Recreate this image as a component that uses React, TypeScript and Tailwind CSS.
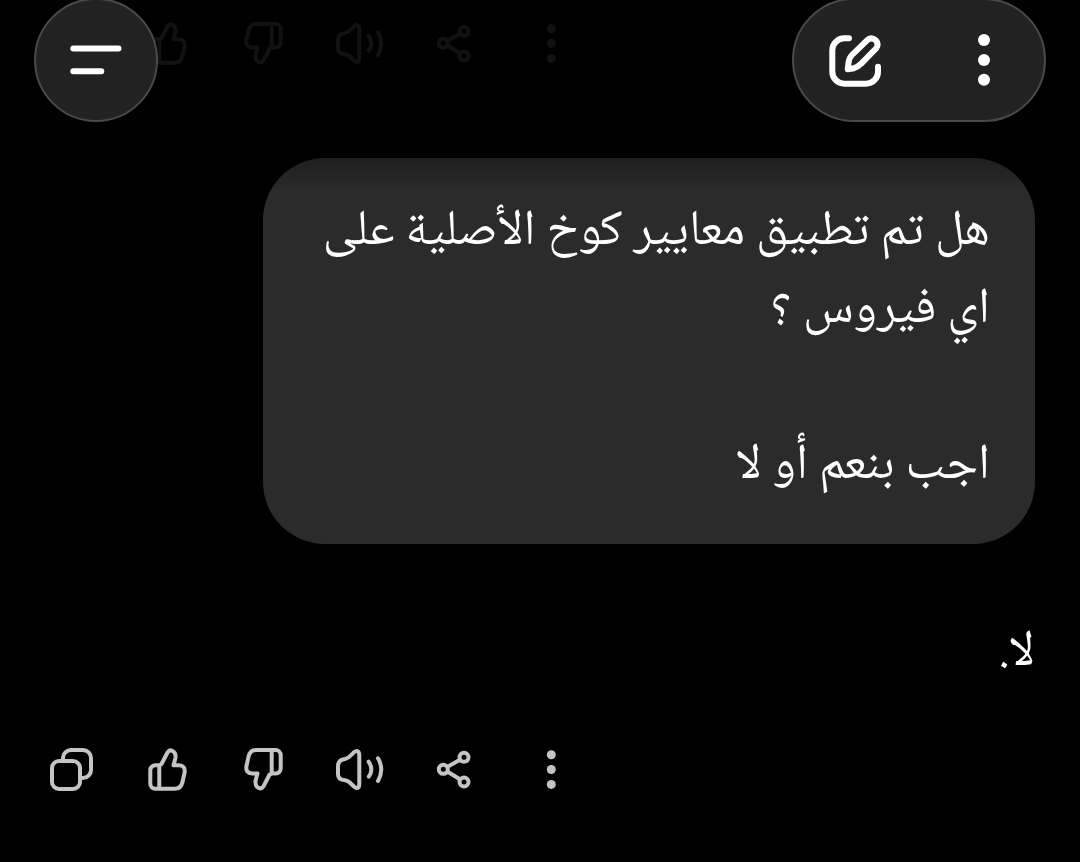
import type { ReactNode } from "react";

type IconProps = { children: ReactNode };

function ActionIcon({ children }: IconProps) {
  return (
    <svg
      viewBox="0 0 48 48"
      className="size-12"
      fill="none"
      stroke="currentColor"
      strokeWidth="4"
      strokeLinecap="round"
      strokeLinejoin="round"
      aria-hidden="true"
    >
      {children}
    </svg>
  );
}

function HeaderIcon({ children }: IconProps) {
  return (
    <svg
      viewBox="0 0 64 64"
      className="size-16"
      fill="none"
      stroke="currentColor"
      strokeWidth="6"
      strokeLinecap="round"
      strokeLinejoin="round"
      aria-hidden="true"
    >
      {children}
    </svg>
  );
}

const thumb =
  "M15.3 19.3 L17.5 18 L23.5 6.5 Q25.5 3.3 28.5 5 Q32 6.5 31.5 11.5 Q31.3 13 29.5 19.3 H35 Q41.5 19.5 40.6 26.5 L38.5 36 Q37 42.7 31 42.7 H11.3 a5 5 0 0 1 -5 -5 V24.3 a5 5 0 0 1 5 -5 H15.3 V42.7";

const actions = [
  {
    label: "نسخ",
    icon: (
      <>
        <rect x="4" y="15" width="28" height="28" rx="7" />
        <path d="M15 15 V12 a8 8 0 0 1 8 -8 H35 a8 8 0 0 1 8 8 V24 a8 8 0 0 1 -8 8 H32" />
      </>
    ),
  },
  { label: "رد جيد", icon: <path d={thumb} /> },
  {
    label: "رد سيئ",
    icon: <path d={thumb} transform="rotate(180 23.5 23.4)" />,
  },
  {
    label: "قراءة بصوت عالٍ",
    icon: (
      <>
        <path d="M23.3 9 Q23 4.5 20.3 5 Q18.5 5.2 15.5 8.8 Q12.5 12.3 9 13 Q2 14 2 20 V28 Q2 33.6 8 34 Q12 34.3 15.5 38.2 Q19 42 20.5 42 Q23.3 42 23.3 38 Z" />
        <path d="M32.6 15.7 Q38 23.3 32.8 30.7 M42 12.3 Q48.5 23.5 42 35" />
      </>
    ),
  },
  {
    label: "مشاركة",
    icon: (
      <>
        <circle cx="11.3" cy="23.3" r="4.5" />
        <circle cx="32" cy="11.3" r="4.5" />
        <circle cx="32" cy="36" r="4.5" />
        <path d="M16 20.6 L27.5 14 M16 26 L27.5 33" />
      </>
    ),
  },
  {
    label: "المزيد",
    icon: (
      <g fill="currentColor" stroke="none">
        <circle cx="23.3" cy="8.7" r="4.5" />
        <circle cx="23.3" cy="23.5" r="4.5" />
        <circle cx="23.3" cy="38.4" r="4.5" />
      </g>
    ),
  },
];

function MessageActions() {
  return (
    <div className="flex px-6 text-[#c4c4c4]">
      {actions.map(({ label, icon }) => (
        <button key={label} type="button" aria-label={label} className="flex w-24 justify-center">
          <ActionIcon>{icon}</ActionIcon>
        </button>
      ))}
    </div>
  );
}

export default function App() {
  return (
    <div className="relative min-h-screen bg-black font-['Noto_Naskh_Arabic','DejaVu_Sans',sans-serif] text-white">
      {/* Scroll fade under the floating header */}
      <div className="pointer-events-none absolute inset-x-0 top-0 z-10 h-48 bg-linear-to-b from-black/91 from-40% to-transparent" />

      <header className="absolute inset-x-0 -top-0.5 z-20 flex justify-between px-[34px]">
        <button
          type="button"
          aria-label="القائمة"
          className="flex size-[124px] items-center justify-center rounded-full border-2 border-[#4a4a4a] bg-[#222222]"
        >
          <HeaderIcon>
            <path d="M9.3 20.5 H54.5 M9.3 43.3 H37.3" />
          </HeaderIcon>
        </button>

        <div className="flex h-[124px] w-[254px] items-center justify-between rounded-full border-2 border-[#4a4a4a] bg-[#222222] px-7">
          <button type="button" aria-label="محادثة جديدة">
            <HeaderIcon>
              <path d="M27 10.3 H22.3 a12 12 0 0 0 -12 12 V43.7 a12 12 0 0 0 12 12 H44 a12 12 0 0 0 12 -12 V38.7" />
              <path d="M25.7 41.3 L26.5 35 Q27 30 30 27 L45.5 11.8 Q49.5 8.6 53.8 12.2 Q57.4 16.5 54 20.5 L39 35.8 Q36 39 32 40.2 Z" />
            </HeaderIcon>
          </button>
          <button type="button" aria-label="خيارات">
            <HeaderIcon>
              <g fill="currentColor" stroke="none">
                <circle cx="32" cy="12" r="6" />
                <circle cx="32" cy="32" r="6" />
                <circle cx="32" cy="51.7" r="6" />
              </g>
            </HeaderIcon>
          </button>
        </div>
      </header>

      <main className="pt-5 pb-16">
        <MessageActions />

        {/* Question */}
        <div dir="rtl" className="mt-[90px] px-[45px]">
          <div className="w-[78%] rounded-[62px] bg-[#2b2b2b] px-[45px] py-[37px] text-[50px] leading-[78px]">
            <p>هل تم تطبيق معايير كوخ الأصلية على اي فيروس ؟</p>
            <p className="mt-[78px]">اجب بنعم أو لا</p>
          </div>
        </div>

        {/* Answer */}
        <p dir="rtl" className="mt-[72px] mb-[52px] px-[45px] text-[50px] leading-[78px]">
          لا.
        </p>

        <MessageActions />
      </main>
    </div>
  );
}
